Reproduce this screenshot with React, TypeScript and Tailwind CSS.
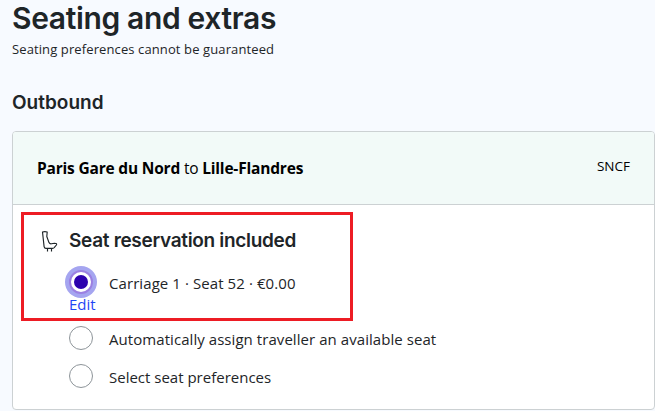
import { useState } from 'react';

interface SeatOption {
  id: string;
  label: string;
  textClass: string;
  editable?: boolean;
}

const OPTIONS: SeatOption[] = [
  { id: 'included', label: 'Carriage 1 · Seat 52 · €0.00', textClass: 'tracking-[0.08px]', editable: true },
  { id: 'auto', label: 'Automatically assign traveller an available seat', textClass: 'tracking-[0.06px]' },
  { id: 'preferences', label: 'Select seat preferences', textClass: '' },
];

function SeatIcon() {
  return (
    <svg width="18" height="24" viewBox="0 0 18 24" fill="none" stroke="#1e2528" strokeWidth="1.15" strokeLinejoin="round">
      <path d="M2.5 3 Q4.8 2.1 7.2 3 L6.8 7.5 L9 13.6 Q9.7 15 11.4 14.8 L14.6 14.2 Q17.4 14.2 16.4 16 L14.6 18.2 Q13.8 19.4 12.4 19.4 H6 Q4.4 19.3 4.1 17.6 Z" />
      <path d="M7.5 19.4 V22.6 M11.5 19.4 V22.6" />
    </svg>
  );
}

function Radio({ checked }: { checked: boolean }) {
  if (checked) {
    return (
      <span className="flex size-6 shrink-0 items-center justify-center rounded-full border-2 border-[#9b80e2] bg-white ring-4 ring-[#a5a5f0]">
        <span className="size-[14px] shrink-0 rounded-full bg-[#2c00ae]" />
      </span>
    );
  }
  return <span className="size-6 shrink-0 rounded-full border border-[#8d9499] bg-white" />;
}

export default function App() {
  const [selected, setSelected] = useState('included');

  return (
    <div className="h-[411px] w-[655px] overflow-hidden bg-[#f7faff] pl-3 font-['Open_Sans',sans-serif] text-[#1e2528]">
      <h1 className="h-[38px] whitespace-nowrap font-['Inter',sans-serif] text-[30px] leading-9 font-semibold tracking-[-0.35px]">
        Seating and extras
      </h1>
      <p className="h-[22px] whitespace-nowrap text-[13px] leading-[22px] tracking-[0.11px]">
        Seating preferences cannot be guaranteed
      </p>
      <h2 className="mt-[31px] h-6 whitespace-nowrap font-['Inter',sans-serif] text-[19px] leading-6 font-semibold">
        Outbound
      </h2>

      <section className="relative mt-4 h-[279px] rounded border border-[#ccd1d3] bg-white">
        <header className="flex h-[73px] justify-between rounded-t-[3px] border-b border-[#ccd1d3] bg-[#f2faf8] pt-[23px] pr-6 pl-6 text-black">
          <p className="whitespace-nowrap pt-px text-[15.5px] leading-6 tracking-[-0.19px]">
            <strong className="font-bold">Paris Gare du Nord</strong> to{' '}
            <strong className="font-bold">Lille-Flandres</strong>
          </p>
          <span className="text-[13.5px] leading-[22px]">SNCF</span>
        </header>

        <div className="pt-6 pl-6">
          <div className="flex h-6 items-center">
            <div className="w-8 pl-[3px]">
              <SeatIcon />
            </div>
            <h3 className="whitespace-nowrap font-['Inter',sans-serif] text-[19px] leading-6 font-semibold tracking-[-0.31px]">
              Seat reservation included
            </h3>
          </div>

          <div className="mt-[17px] pl-8">
            {OPTIONS.map((o) => (
              <div key={o.id} className={o.editable ? 'h-14' : 'h-[38px]'}>
                <button
                  type="button"
                  onClick={() => setSelected(o.id)}
                  className="flex h-6 items-center gap-4 text-left"
                >
                  <Radio checked={selected === o.id} />
                  <span className={`whitespace-nowrap pt-[2px] text-[15px] leading-6 ${o.textClass}`}>
                    {o.label}
                  </span>
                </button>
                {o.editable && (
                  <a href="#" className="block w-fit text-[15px] leading-5 text-[#1f46f5]">
                    Edit
                  </a>
                )}
              </div>
            ))}
          </div>
        </div>

        <div className="pointer-events-none absolute top-[80px] left-2 h-[109px] w-[332px] border-[3px] border-[#ed1c24]" />
      </section>
    </div>
  );
}
